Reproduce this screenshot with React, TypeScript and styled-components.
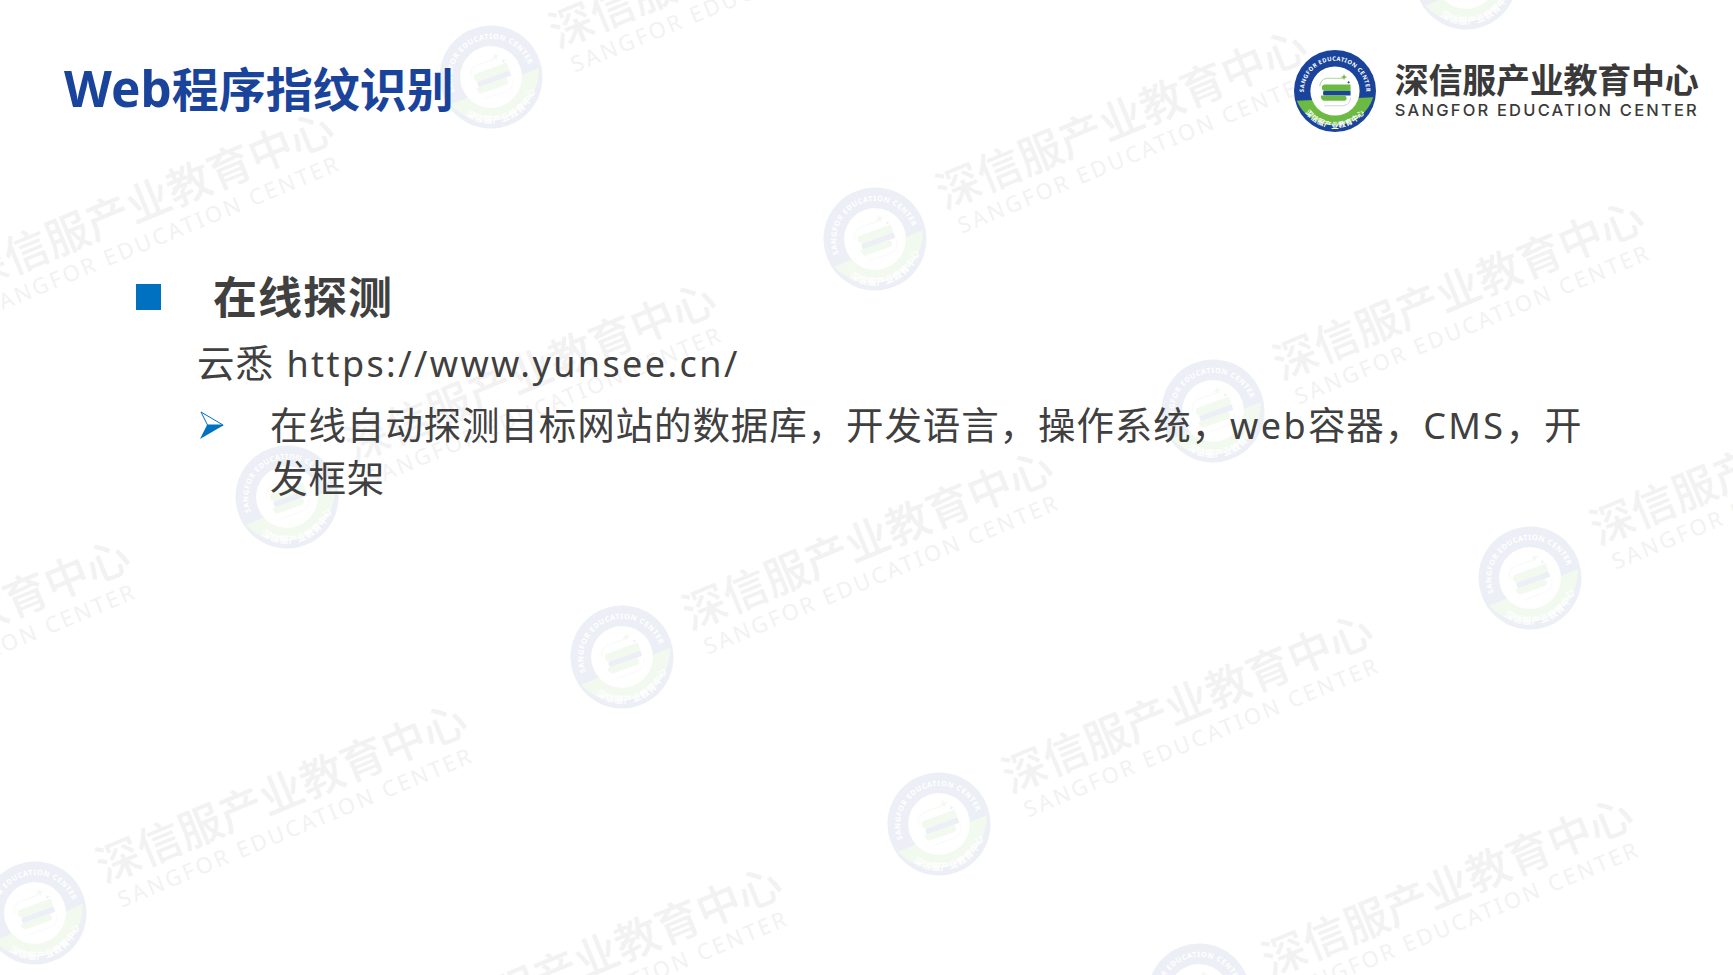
import React, { useId } from 'react';
import styled, { createGlobalStyle } from 'styled-components';

const BLUE = '#1a439b';
const GREEN = '#6cb943';
const CJK = '"Noto Sans", "Noto Sans CJK SC", sans-serif';

const GlobalStyle = createGlobalStyle`
  html, body {
    margin: 0;
    padding: 0;
    background: #fff;
  }
`;

const Slide = styled.div`
  position: relative;
  width: 1733px;
  height: 975px;
  overflow: hidden;
  background: #fff;
  font-family: ${CJK};
`;

const WatermarkLayer = styled.div`
  position: absolute;
  inset: 0;
`;

const WatermarkBlock = styled.div`
  position: absolute;
  width: 420px;
  transform: translate(-50%, -50%) rotate(-22.5deg);
  text-align: center;
  color: #f2f2f3;
  white-space: nowrap;
`;

const WatermarkCn = styled.div`
  font-size: 44px;
  line-height: 48px;
  font-weight: 500;
`;

const WatermarkEn = styled.div`
  font-size: 22px;
  line-height: 26px;
  letter-spacing: 2.7px;
`;

const Stamp = styled.div`
  position: absolute;
  width: 103px;
  height: 103px;
  transform: translate(-50%, -50%) rotate(-20deg);
  opacity: 0.08;
`;

const Content = styled.div`
  position: relative;
  display: flex;
  flex-direction: column;
`;

const Header = styled.header`
  display: flex;
  justify-content: space-between;
  align-items: flex-start;
  padding: 50px 34px 0 64px;
  height: 131px;
`;

const Title = styled.h1`
  margin: 7px 0 0;
  font-size: 47px;
  line-height: 62px;
  font-weight: 700;
  color: ${BLUE};
`;

const TitleLatin = styled.span`
  font-size: 49.5px;
`;

const Logo = styled.div`
  display: flex;
  align-items: center;
  gap: 19px;
`;

const LogoSeal = styled.div`
  width: 82px;
  height: 82px;
`;

const LogoText = styled.div`
  display: flex;
  flex-direction: column;
  color: #3a3a3a;
  white-space: nowrap;
`;

const LogoCn = styled.div`
  font-size: 34px;
  line-height: 38px;
  letter-spacing: -0.25px;
  font-weight: 700;
  margin-top: -1px;
`;

const LogoEn = styled.div`
  font-family: Inter, sans-serif;
  font-size: 16.5px;
  line-height: 20px;
  letter-spacing: 2.2px;
  font-weight: 500;
  margin-top: 1px;
`;

const Body = styled.main`
  display: flex;
  flex-direction: column;
  padding: 85px 0 0 136px;
  color: #404040;
`;

const SectionRow = styled.div`
  display: flex;
  align-items: center;
  gap: 52px;
  height: 62px;
`;

const SquareBullet = styled.span`
  width: 25px;
  height: 26px;
  background: #0070c0;
`;

const SectionTitle = styled.h2`
  margin: 0;
  font-size: 44px;
  line-height: 62px;
  font-weight: 700;
  letter-spacing: 1px;
`;

const Line = styled.p`
  margin: 5px 0 0 61px;
  font-size: 37.5px;
  line-height: 60px;
  letter-spacing: 0.9px;
`;

const Latin = styled.span`
  font-size: 36px;
  letter-spacing: 2.4px;
`;

const UrlText = styled(Latin)`
  margin-left: 2px;
`;

const ListRow = styled.div`
  display: flex;
  margin: 5px 0 0 64px;
  gap: 46px;
  width: 1384px;
`;

const Arrow = styled.svg`
  flex: none;
  width: 24px;
  height: 28px;
  margin-top: 12px;
`;

const ListText = styled.p`
  margin: 0;
  font-size: 37.5px;
  line-height: 52px;
  letter-spacing: 0.9px;
`;

const Seal: React.FC = () => {
  const id = useId();
  return (
    <svg viewBox="0 0 100 100" width="100%" height="100%">
      <defs>
        <path id={`${id}top`} d="M15.5 67 A38 38 0 1 1 84.5 67" />
        <path id={`${id}bottom`} d="M8 66 A45 45 0 0 0 92 66" />
      </defs>
      <circle cx="50" cy="50" r="50" fill={BLUE} />
      <path d="M3.3 61.8 L96.7 57.7 A50 50 0 0 1 3.3 61.8Z" fill={GREEN} />
      <circle cx="50" cy="50" r="30" fill="#fff" />
      <path d="M60 34.5 H41 A9.5 9.5 0 0 0 31.5 44" fill="none" stroke="#8fc77a" strokeWidth="0.9" />
      <path d="M38 42 H69 V50 H38 A4 4 0 0 1 38 42Z" fill={GREEN} />
      <path d="M36 50 H69 V55.5 H36 A6 6 0 0 1 36 50Z" fill={BLUE} />
      <path d="M33 55.5 H62 A3.5 3.5 0 0 1 62 62 H36 A6 6 0 0 1 33 55.5Z" fill={GREEN} />
      <path d="M69 58 A10 10 0 0 1 60 68 H37" fill="none" stroke="#b9c3e4" strokeWidth="0.9" />
      <path d="M61 29 L62 32 L65 33 L62 34 L61 37 L60 34 L57 33 L60 32Z" fill={GREEN} />
      <path d="M66.7 37.4 L67.3 38.8 L68.7 39.4 L67.3 40 L66.7 41.4 L66.1 40 L64.7 39.4 L66.1 38.8Z" fill={BLUE} />
      <text fontSize="7.2" fontWeight="700" fill="#fff" letterSpacing="0.5" fontFamily='"Noto Sans", sans-serif'>
        <textPath href={`#${id}top`} startOffset="50%" textAnchor="middle">
          SANGFOR EDUCATION CENTER
        </textPath>
      </text>
      <text fontSize="9" fontWeight="700" fill="#fff" letterSpacing="0.4" fontFamily={CJK}>
        <textPath href={`#${id}bottom`} startOffset="50%" textAnchor="middle">
          深信服产业教育中心
        </textPath>
      </text>
    </svg>
  );
};

const watermarks = [
  [739, -31], [1126, 130], [153, 212], [1463, 301], [535, 383], [872, 551],
  [-51, 640], [1780, 466], [1192, 714], [286, 804], [1452, 898], [601, 967],
];

const stamps = [
  [491, 77], [1466, -22], [875, 239], [1213, 411], [287, 497],
  [1530, 578], [622, 657], [939, 824], [35, 913], [1199, 995],
];

export default function App() {
  return (
    <Slide>
      <GlobalStyle />
      <WatermarkLayer>
        {watermarks.map(([x, y]) => (
          <WatermarkBlock key={`${x}-${y}`} style={{ left: x, top: y }}>
            <WatermarkCn>深信服产业教育中心</WatermarkCn>
            <WatermarkEn>SANGFOR EDUCATION CENTER</WatermarkEn>
          </WatermarkBlock>
        ))}
        {stamps.map(([x, y]) => (
          <Stamp key={`${x}-${y}`} style={{ left: x, top: y }}>
            <Seal />
          </Stamp>
        ))}
      </WatermarkLayer>

      <Content>
        <Header>
          <Title>
            <TitleLatin>Web</TitleLatin>程序指纹识别
          </Title>
          <Logo>
            <LogoSeal>
              <Seal />
            </LogoSeal>
            <LogoText>
              <LogoCn>深信服产业教育中心</LogoCn>
              <LogoEn>SANGFOR EDUCATION CENTER</LogoEn>
            </LogoText>
          </Logo>
        </Header>

        <Body>
          <SectionRow>
            <SquareBullet />
            <SectionTitle>在线探测</SectionTitle>
          </SectionRow>
          <Line>
            云悉 <UrlText>https://www.yunsee.cn/</UrlText>
          </Line>
          <ListRow>
            <Arrow viewBox="0 0 24 28">
              <path d="M24 14 L0 28 L7 14Z" fill="#0070c0" />
              <path d="M23 14 L1 1 L7.5 14Z" fill="#fff" stroke="#0070c0" strokeWidth="1" />
            </Arrow>
            <ListText>
              在线自动探测目标网站的数据库，开发语言，操作系统，<Latin>web</Latin>容器，<Latin>CMS</Latin>，开发框架
            </ListText>
          </ListRow>
        </Body>
      </Content>
    </Slide>
  );
}
